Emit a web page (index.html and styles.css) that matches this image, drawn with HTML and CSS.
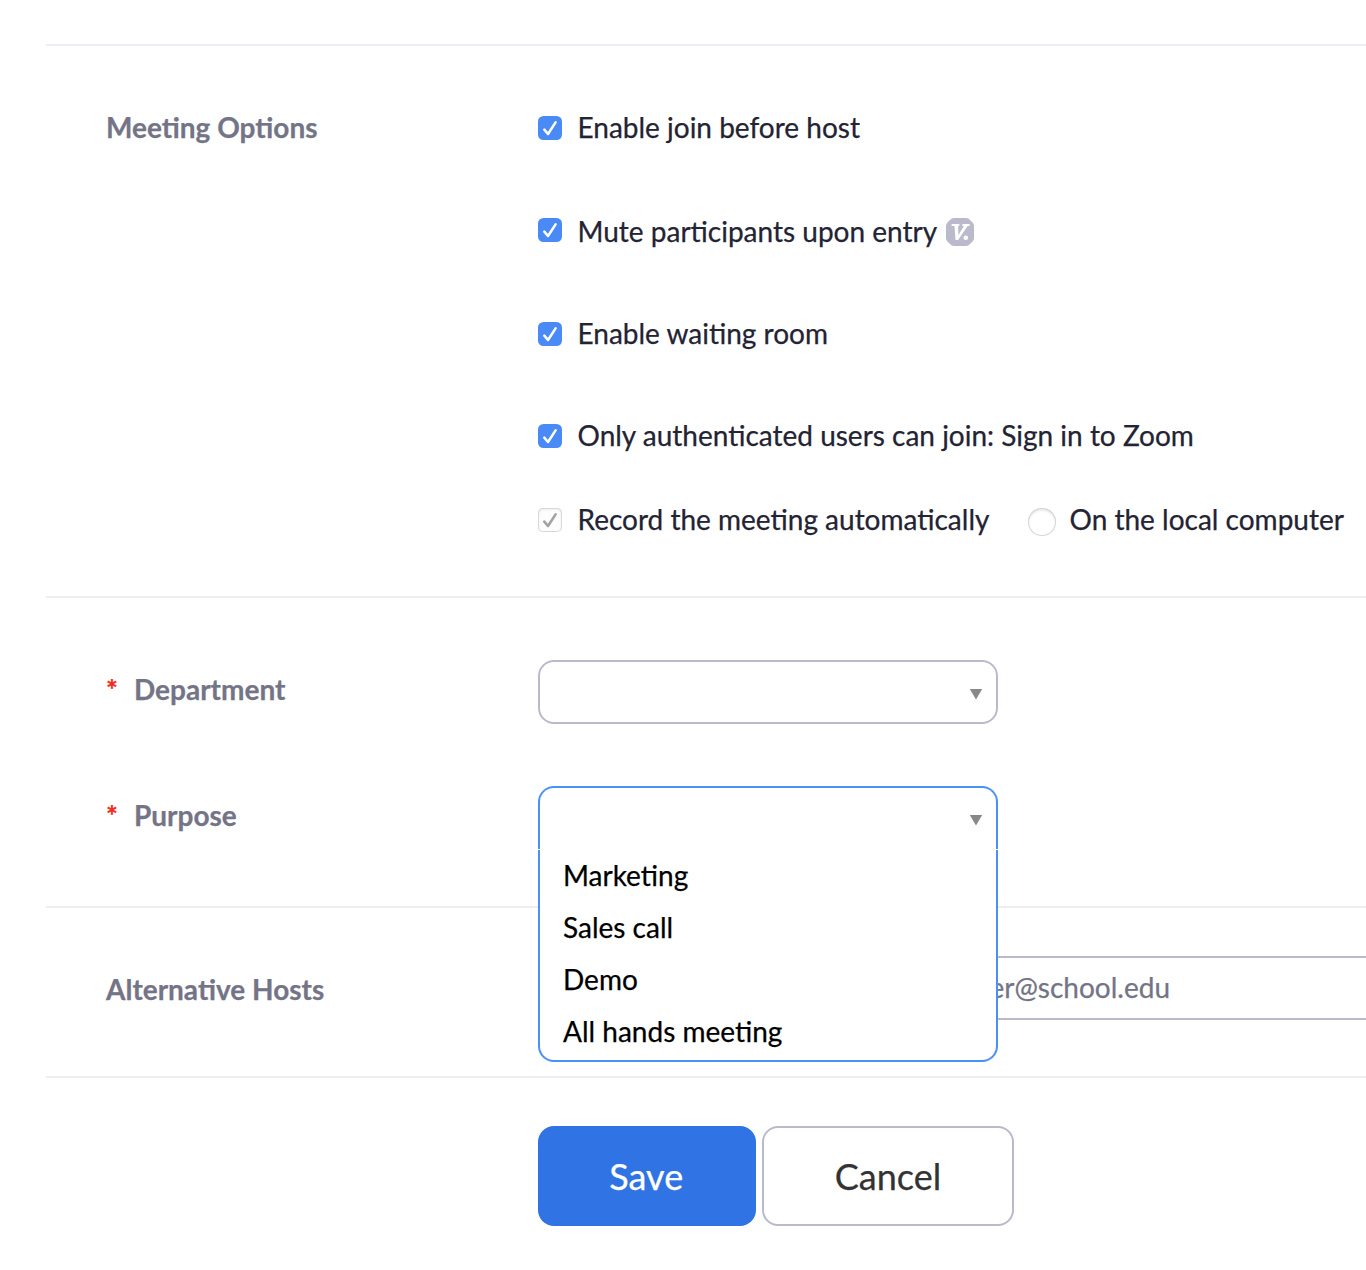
FILE: index.html
```html
<!DOCTYPE html>
<html lang="en">
<head>
<meta charset="utf-8">
<title>Schedule a Meeting</title>
<link rel="stylesheet" href="styles.css">
</head>
<body>
<form class="form">
  <section class="section section-options">
    <div class="label">Meeting Options</div>
    <div class="options">
      <label class="option">
        <svg class="check" viewBox="0 0 24 24"><rect width="24" height="24" rx="5.5" fill="#4a8af6"/><path d="M6.3 13.6 10 18 17.6 6.4" class="tick"/></svg>
        <span class="text">Enable join before host</span>
      </label>
      <label class="option option-mute">
        <svg class="check" viewBox="0 0 24 24"><rect width="24" height="24" rx="5.5" fill="#4a8af6"/><path d="M6.3 13.6 10 18 17.6 6.4" class="tick"/></svg>
        <span class="text">Mute participants upon entry</span>
        <svg class="version" viewBox="0 0 28 28"><path d="M8 0H20Q22 0 23.2 1.2L26.8 4.8Q28 6 28 8V20Q28 22 26.8 23.2L23.2 26.8Q22 28 20 28H8Q6 28 4.8 26.8L1.2 23.2Q0 22 0 20V8Q0 6 1.2 4.8L4.8 1.2Q6 0 8 0Z" fill="#babacc"/><path d="M5.800 6H13.500L13.200 7.900H12.100L12.400 17 18 7.900H16.200L16.600 6H23.800L23.400 7.900H21.600L12.100 22H9.500L8.500 7.900H5.400Z" fill="#fff"/><circle cx="19.800" cy="19.800" r="2.300" fill="#fff"/></svg>
      </label>
      <label class="option">
        <svg class="check" viewBox="0 0 24 24"><rect width="24" height="24" rx="5.5" fill="#4a8af6"/><path d="M6.3 13.6 10 18 17.6 6.4" class="tick"/></svg>
        <span class="text">Enable waiting room</span>
      </label>
      <label class="option">
        <svg class="check" viewBox="0 0 24 24"><rect width="24" height="24" rx="5.5" fill="#4a8af6"/><path d="M6.3 13.6 10 18 17.6 6.4" class="tick"/></svg>
        <span class="text">Only authenticated users can join: Sign in to Zoom</span>
      </label>
      <div class="option">
        <svg class="check check-off" viewBox="0 0 24 24"><path d="M6.3 13.6 10 18 17.6 6.4" class="tick tick-off"/></svg>
        <span class="text record-text">Record the meeting automatically</span>
        <span class="radio"></span>
        <span class="text">On the local computer</span>
      </div>
    </div>
  </section>
  <section class="section section-tracking">
    <div class="field">
      <div class="label"><span class="star">*</span>Department</div>
      <div class="select"><svg class="arrow" viewBox="0 0 14 12"><path d="M.8 1H13.2L7 11.5Z" fill="#888"/></svg></div>
    </div>
    <div class="field">
      <div class="label"><span class="star">*</span>Purpose</div>
      <div class="select select-open"><svg class="arrow" viewBox="0 0 14 12"><path d="M.8 1H13.2L7 11.5Z" fill="#888"/></svg>
        <ul class="menu">
          <li>Marketing</li>
          <li>Sales call</li>
          <li>Demo</li>
          <li>All hands meeting</li>
        </ul>
      </div>
    </div>
  </section>
  <section class="section section-hosts">
    <div class="label">Alternative Hosts</div>
    <div class="input"><div class="hint">er@school.edu</div></div>
  </section>
  <div class="actions">
    <button type="button" class="button button-save">Save</button>
    <button type="button" class="button button-cancel">Cancel</button>
  </div>
</form>
</body>
</html>
```
FILE: styles.css
```css
* { box-sizing: border-box; }
body {
  margin: 0;
  height: 1270px;
  overflow: hidden;
  background: #fff;
  color: #232333;
  font: 28px/40px Lato, "Liberation Sans", sans-serif;
  -webkit-text-stroke: .25px;
}
.form { margin: 44px 0 0 46px; }
.section { border-top: 2px solid #ededf4; }
.section-options, .field, .section-hosts {
  display: grid;
  grid-template-columns: 432px 1fr;
  padding-left: 60px;
}
.label { color: #747487; font-weight: 700; white-space: nowrap; }
.section-options { height: 552px; padding-top: 61px; }
.options { display: flex; flex-direction: column; padding-top: 1px; }
.option { display: flex; align-items: center; height: 40px; margin-bottom: 62px; white-space: nowrap; }
.option:nth-child(1) { margin-bottom: 64px; }
.option:nth-child(4) { margin-bottom: 44px; }
.text { padding-bottom: 2px; }
.check { width: 24px; height: 24px; margin-right: 15.5px; flex: none; }
.option-mute .check { margin-bottom: 4px; }
.tick { fill: none; stroke: #fff; stroke-width: 2.5; stroke-linecap: round; stroke-linejoin: round; }
.tick-off { stroke: #a2a2a2; stroke-width: 2.6; }
.check-off {
  border-radius: 5px;
  background: #fdfdfd;
  box-shadow: inset 0 0 0 1px #d9d9d9, inset 0 1px 3px #ddd;
}
.version { width: 28px; height: 28px; margin-left: 9px; }
.record-text { margin-right: 38.8px; }
.radio {
  width: 28px;
  height: 28px;
  margin: 4px 13.3px 0 0;
  border-radius: 50%;
  box-shadow: inset 0 0 0 1px #d6d6d6, inset 0 2px 3px #e0e0e0;
}
.section-tracking { height: 310px; padding-top: 62px; }
.field { height: 126px; }
.field .label { padding-top: 9px; }
.star { display: inline-block; width: 28px; color: #f02a1c; }
.select {
  position: relative;
  display: flex;
  justify-content: flex-end;
  align-items: center;
  width: 460px;
  height: 64px;
  padding-right: 13px;
  border: 2px solid #babacc;
  border-radius: 16px;
}
.arrow { width: 14px; height: 12px; margin-top: 3px; }
.select-open {
  height: 63px;
  border-color: #4a90f8;
  border-bottom: 0;
  border-radius: 16px 16px 0 0;
}
.menu {
  position: absolute;
  z-index: 2;
  top: 62px;
  left: -2px;
  width: 460px;
  height: 212px;
  margin: 0;
  padding: 0 0 0 23px;
  border: 2px solid #4a90f8;
  border-top: 0;
  border-radius: 0 0 16px 16px;
  background: #fff;
  color: #000;
  list-style: none;
}
.menu li { height: 52px; line-height: 50px; }
.section-hosts { height: 170px; padding-top: 48px; }
.section-hosts .label { padding-top: 13px; }
.input {
  height: 64px;
  padding: 9px 24px;
  border: 2px solid #babacc;
  border-right: 0;
  border-radius: 16px 0 0 16px;
  color: #747487;
  white-space: nowrap;
}
.hint { width: 606px; text-align: right; }
.actions {
  display: flex;
  gap: 6px;
  padding: 48px 0 0 492px;
  border-top: 2px solid #ededf4;
}
.button {
  height: 100px;
  padding: 0 0 1px;
  border-radius: 16px;
  font: 36px/48px Lato, "Liberation Sans", sans-serif;
  -webkit-text-stroke: .25px;
}
.button-save { width: 218px; padding-right: 1.5px; border: 0; background: #2f73e4; color: #fff; }
.button-cancel { width: 252px; border: 2px solid #babacc; background: #fff; color: #333; }
```
